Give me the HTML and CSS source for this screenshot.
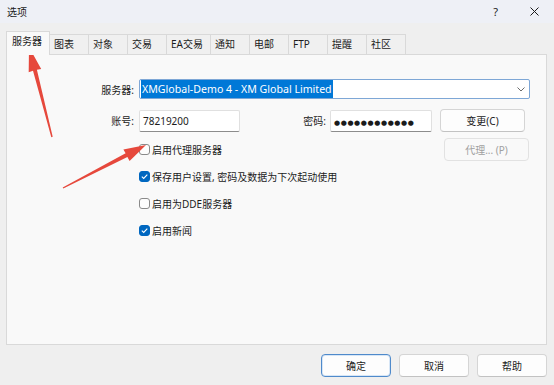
FILE: index.html
```html
<!DOCTYPE html>
<html lang="zh-CN">
  <head>
    <meta charset="UTF-8" />
    <meta name="viewport" content="width=device-width, initial-scale=1.0" />
    <title>选项</title>
    <link rel="stylesheet" href="styles.css">
  </head>

  <body>
    <div class="window">
      <div class="titlebar">
        <span class="title">选项</span>
        <span class="help">?</span>
        <span class="close">
          <svg width="9" height="9" viewBox="0 0 9 9">
            <path d="M0.5 0.5 L8.5 8.5 M8.5 0.5 L0.5 8.5" stroke="#1a1a1a" stroke-width="1" fill="none" />
          </svg>
        </span>
      </div>

      <div class="content">
        <div class="tabs">
          <div class="tab active">服务器</div>
          <div class="tab">图表</div>
          <div class="tab">对象</div>
          <div class="tab">交易</div>
          <div class="tab">EA交易</div>
          <div class="tab">通知</div>
          <div class="tab">电邮</div>
          <div class="tab">FTP</div>
          <div class="tab">提醒</div>
          <div class="tab">社区</div>
        </div>

        <div class="panel">
          <div class="row">
            <label class="label">服务器:</label>
            <div class="combo">
              <span class="selected-text">XMGlobal-Demo 4 - XM Global Limited</span>
              <svg class="chevron" width="8" height="5" viewBox="0 0 8 5">
                <path d="M0.5 0.5 L4 4 L7.5 0.5" stroke="#6b6b6b" stroke-width="1" fill="none" />
              </svg>
            </div>
          </div>

          <div class="row row-account">
            <label class="label">账号:</label>
            <div class="input input-account">78219200</div>
            <label class="label-pass">密码:</label>
            <div class="input input-pass"><span class="dots">●●●●●●●●●●●●</span></div>
            <button class="btn btn-side">变更(C)</button>
          </div>

          <div class="options">
            <div class="checks">
              <label class="check"><span class="box"></span>启用代理服务器</label>
              <label class="check"><span class="box checked"></span>保存用户设置, 密码及数据为下次起动使用</label>
              <label class="check"><span class="box"></span>启用为DDE服务器</label>
              <label class="check"><span class="box checked"></span>启用新闻</label>
            </div>
            <button class="btn btn-side" disabled>代理... (P)</button>
          </div>
        </div>

        <div class="footer">
          <button class="btn btn-default">确定</button>
          <button class="btn">取消</button>
          <button class="btn">帮助</button>
        </div>
      </div>

      <!-- red annotation arrows drawn over the dialog -->
      <svg class="annotations" width="554" height="385" viewBox="0 0 554 385">
        <polygon points="29,47 41.2,69 36.9,69.8 52.7,136.8 51.3,137.2 33,70.8 28.7,72.2" />
        <polygon points="146,145 129.6,161 127.4,156.9 63.3,188.5 62.7,187.5 125.6,153.3 123.4,149.4" />
      </svg>
    </div>
  </body>
</html>
```

FILE: styles.css
```css
:root {
  box-sizing: border-box;
  --border: 1px solid #d9d9d9;
  --text: #1b1b1b;
  --accent: #0067c0;
}
*,
*::before,
*::after {
  box-sizing: inherit;
}
body {
  margin: 0;
  background: #f0f0f0;
  font-family: 'Noto Sans', 'Noto Sans CJK SC', sans-serif;
  font-size: 10px;
  color: var(--text);
}
.window {
  position: relative;
  width: 554px;
  height: 385px;
  background: #efefef;
  overflow: hidden;
}

/* title bar */
.titlebar {
  display: flex;
  align-items: center;
  height: 23px;
  padding: 0 15px 0 7px;
  background: #eef0f6;
}
.title {
  flex: 1;
}
.help {
  font-size: 11px;
  margin-right: 32px;
}
.close {
  display: flex;
}

/* tabs */
.content {
  padding: 8px 7px 0 6px;
}
.tabs {
  display: flex;
  align-items: flex-end;
  height: 23px;
}
.tab {
  min-width: 40px;
  height: 20px;
  line-height: 18px;
  padding: 0 7px 0 4px;
  background: #f0f0f0;
  border: var(--border);
  border-bottom: none;
  margin-left: -1px;
  white-space: nowrap;
}
.tab.active {
  position: relative;
  z-index: 1;
  min-width: 42px;
  height: 24px;
  line-height: 19px;
  margin-left: 0;
  margin-bottom: -1px;
  padding-left: 5px;
  background: #f9f9f9;
}

/* panel */
.panel {
  height: 291px;
  padding: 24px 17px 0 0;
  background: #f9f9f9;
  border: var(--border);
}
.row {
  display: flex;
  align-items: center;
}
.label {
  width: 127px;
  margin-right: 5px;
  text-align: right;
}
.combo {
  display: flex;
  align-items: center;
  justify-content: space-between;
  width: 391px;
  height: 20px;
  padding: 0 4px 0 1px;
  margin-right: -1px;
  margin-left: auto;
  background: white;
  border: 1px solid #7ea7d6;
  border-radius: 2px;
}
.selected-text {
  font-size: 10.6px;
  line-height: 18px;
  padding: 0 1px;
  background: #0078d7;
  color: white;
}
.chevron {
  margin-top: 1px;
}

.row-account {
  margin-top: 10px;
}
.input {
  height: 22px;
  line-height: 20px;
  padding: 0 3px;
  background: white;
  border: 1px solid #e0e0e0;
  border-bottom-color: #8c8c8c;
  border-radius: 2px;
}
.input-account {
  width: 101px;
}
.label-pass {
  width: 90px;
  padding-right: 4px;
  text-align: right;
}
.input-pass {
  width: 102px;
}
.dots {
  font-family: 'DejaVu Sans', sans-serif;
  font-size: 7px;
  letter-spacing: 0.6px;
}

.btn {
  height: 23px;
  padding: 0;
  font-family: inherit;
  font-size: 10px;
  color: var(--text);
  background: #fdfdfd;
  border: 1px solid #d5d5d5;
  border-bottom-color: #c2c2c2;
  border-radius: 4px;
}
.btn:disabled {
  color: #a0a0a0;
  background: #f9f9f9;
  border-color: #e2e2e2;
}
.btn-side {
  width: 85px;
  margin-left: auto;
}
.row-account .btn-side {
  margin-left: 8px;
}

/* checkboxes */
.options {
  display: flex;
  align-items: flex-start;
  margin-top: 6px;
}
.checks {
  display: flex;
  flex-direction: column;
  gap: 5px;
  padding-left: 132px;
}
.check {
  display: flex;
  align-items: center;
  height: 22px;
}
.box {
  width: 11px;
  height: 11px;
  margin-right: 2px;
  background: #fdfdfd;
  border: 1px solid #8a8a8a;
  border-radius: 3px;
}
.box.checked {
  border-color: var(--accent);
  background: var(--accent)
    url("data:image/svg+xml,%3Csvg xmlns='http://www.w3.org/2000/svg' width='9' height='9' viewBox='0 0 9 9'%3E%3Cpath d='M1.8 4.6 L3.7 6.4 L7.3 2.6' stroke='white' stroke-width='1.1' fill='none'/%3E%3C/svg%3E")
    center / 9px 9px no-repeat;
}

/* bottom buttons */
.footer {
  display: flex;
  justify-content: flex-end;
  gap: 8px;
  margin-top: 9px;
}
.footer .btn {
  width: 70px;
}
.btn-default {
  border-color: #4f8acb;
  box-shadow: inset 0 0 0 1px #d7e6f6;
}

.annotations {
  position: absolute;
  top: 0;
  left: 0;
  pointer-events: none;
  fill: #e6483c;
}
```
